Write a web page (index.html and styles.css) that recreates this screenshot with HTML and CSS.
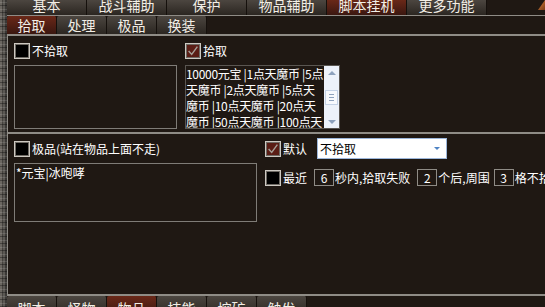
FILE: index.html
```html
<!DOCTYPE html>
<html lang="zh-CN">
<head>
  <meta charset="UTF-8" />
  <meta name="viewport" content="width=device-width, initial-scale=1" />
  <title>脚本挂机 - 物品</title>
  <link rel="stylesheet" href="styles.css">
</head>
<body>
  <div class="window">
    <div class="edge"></div>

    <div class="main">
      <nav class="tabs tabs-top">
        <span class="tab">基本</span>
        <span class="tab">战斗辅助</span>
        <span class="tab">保护</span>
        <span class="tab">物品辅助</span>
        <span class="tab active">脚本挂机</span>
        <span class="tab">更多功能</span>
        <span class="corner"></span>
      </nav>

      <nav class="tabs tabs-sub">
        <span class="tab active">拾取</span>
        <span class="tab">处理</span>
        <span class="tab">极品</span>
        <span class="tab">换装</span>
      </nav>

      <div class="panel">
        <!-- pick / no pick lists -->
        <section class="pick">
          <div class="col pick-left">
            <label class="check"><span class="box"></span>不拾取</label>
            <div class="list"></div>
          </div>
          <div class="col pick-right">
            <label class="check"><span class="box checked"><svg viewBox="0 0 16 16"><polyline points="3,8 6.5,12 13,3" /></svg></span>拾取</label>
            <div class="list list-scroll">
              <div class="list-text">10000元宝 |1点天魔币 |5点<br>天魔币 |2点天魔币 |5点天<br>魔币 |10点天魔币 |20点天<br>魔币 |50点天魔币 |100点天</div>
              <div class="scrollbar">
                <span class="arrow up"></span>
                <span class="thumb"><i></i><i></i><i></i></span>
                <span class="arrow down"></span>
              </div>
            </div>
          </div>
        </section>

        <!-- rare items -->
        <section class="rare">
          <div class="col rare-left">
            <label class="check"><span class="box"></span>极品(站在物品上面不走)</label>
            <div class="list list-rare">*元宝|冰咆哮</div>
          </div>
          <div class="col rare-right">
            <div class="row row-default">
              <label class="check"><span class="box checked"><svg viewBox="0 0 16 16"><polyline points="3,8 6.5,12 13,3" /></svg></span>默认</label>
              <div class="select">不拾取<span class="caret"></span></div>
            </div>
            <div class="row row-fail">
              <label class="check"><span class="box"></span>最近</label>
              <span class="num num-first">6</span>
              <span class="txt">秒内,拾取失败</span>
              <span class="num">2</span>
              <span class="txt txt-short">个后,周围</span>
              <span class="num">3</span>
              <span class="txt">格不拾取</span>
            </div>
          </div>
        </section>
      </div>

      <nav class="tabs tabs-bottom">
        <span class="tab">脚本</span>
        <span class="tab">怪物</span>
        <span class="tab active">物品</span>
        <span class="tab">技能</span>
        <span class="tab">挖矿</span>
        <span class="tab">触发</span>
      </nav>
    </div>
  </div>
</body>
</html>
```

FILE: styles.css
```css
body {
  margin: 0;
  background: #1f1813;
  color: #fff;
  font-family: "Noto Sans CJK SC", "Noto Sans", sans-serif;
  font-size: 12px;
  overflow: hidden;
}
.window {
  display: flex;
  height: 307px;
  overflow: hidden;
}
/* stone strip on the left */
.edge {
  flex: none;
  width: 7px;
  background:
    repeating-linear-gradient(0deg, rgba(0,0,0,0.35) 0 1px, transparent 1px 3px, rgba(255,255,255,0.12) 3px 4px, transparent 4px 7px),
    repeating-linear-gradient(90deg, #6b6761 0 2px, #45423e 2px 3px, #5c5954 3px 5px, #3a3835 5px 7px);
}
.main {
  flex: 1;
  min-width: 0;
  display: flex;
  flex-direction: column;
}

/* tabs */
.tabs {
  display: flex;
  flex: none;
}
.tab {
  flex: none;
  text-align: center;
  color: #f2eee6;
  font-size: 14px;
  box-sizing: border-box;
  background: linear-gradient(#4c4640, #2b2621);
  border-right: 1px solid #15100c;
}
.tab.active {
  background: linear-gradient(#6a2818, #3a1710);
}
.tabs-top {
  height: 15px;
  border-bottom: 1px solid #8f8c86;
  position: relative;
}
.tabs-top .tab {
  width: 80px;
  line-height: 11px;
}
.corner {
  position: absolute;
  right: 0;
  top: 0;
  width: 7px;
  height: 10px;
  background: linear-gradient(135deg, #d9823a, #7a3c18);
  clip-path: polygon(100% 0, 100% 100%, 0 100%);
}
.tabs-sub {
  height: 18px;
}
.tabs-sub .tab {
  width: 50px;
  line-height: 19px;
  border-radius: 2px 2px 0 0;
}
.tabs-bottom {
  height: 20px;
}
.tabs-bottom .tab {
  width: 50px;
  line-height: 24px;
  border-radius: 2px 2px 0 0;
}

/* main panel */
.panel {
  flex: none;
  border-top: 2px solid #8f8c86;
  border-bottom: 2px solid #8f8c86;
  border-left: 1px solid #8f8c86;
}
.pick,
.rare {
  display: flex;
  gap: 8px;
  box-sizing: border-box;
  padding: 7px 0 0 6px;
}
.pick {
  height: 98px;
  border-bottom: 2px solid #8f8c86;
}
.rare {
  height: 160px;
}
.col {
  flex: none;
  display: flex;
  flex-direction: column;
  gap: 6px;
}
.pick-left { width: 163px; }
.pick-right { width: 155px; }
.rare-left { width: 243px; }
.rare-right {
  flex: 1;
  min-width: 0;
  overflow: hidden;
  margin-top: -3px;
  gap: 10px;
}

/* checkbox */
.check {
  display: flex;
  align-items: center;
  gap: 2px;
  height: 16px;
  line-height: 16px;
  white-space: nowrap;
}
.box {
  flex: none;
  width: 16px;
  height: 16px;
  box-sizing: border-box;
  border: 1px solid #cdc9c2;
  box-shadow: inset 0 0 0 1px #6e6a64;
  background: #000;
}
.box.checked {
  background: #5a1d15;
}
.box svg {
  display: block;
  width: 14px;
  height: 14px;
}
.box polyline {
  fill: none;
  stroke: #a59f97;
  stroke-width: 1.6;
}

/* list boxes */
.list {
  box-sizing: border-box;
  height: 64px;
  border: 1px solid #7f7c77;
}
.list-scroll {
  display: flex;
  border-color: #5a5651;
}
.list-text {
  flex: 1;
  min-width: 0;
  overflow: hidden;
  white-space: nowrap;
  line-height: 16px;
  font-size: 12px;
  letter-spacing: -0.3px;
}
.scrollbar {
  flex: none;
  width: 15px;
  display: flex;
  flex-direction: column;
  align-items: center;
  justify-content: space-between;
  background: #edf2fa;
  padding: 5px 0 4px;
  box-sizing: border-box;
}
.arrow {
  width: 0;
  height: 0;
  border-left: 4px solid transparent;
  border-right: 4px solid transparent;
}
.arrow.up { border-bottom: 4px solid #8ea2bd; }
.arrow.down { border-top: 4px solid #8ea2bd; }
.thumb {
  width: 13px;
  height: 15px;
  box-sizing: border-box;
  border: 1px solid #c4d2e6;
  background: #f7f9fd;
  display: flex;
  flex-direction: column;
  align-items: center;
  justify-content: center;
  gap: 2px;
}
.thumb i {
  display: block;
  width: 5px;
  height: 1px;
  background: #8ea2bd;
}
.list-rare {
  height: 59px;
  line-height: 16px;
  padding: 1px 0 0 1px;
}

/* right side rows */
.row {
  flex: none;
  display: flex;
  align-items: center;
  white-space: nowrap;
}
.row-default {
  height: 21px;
}
.row-default .check {
  margin-right: 10px;
}
.select {
  flex: none;
  position: relative;
  width: 130px;
  height: 21px;
  box-sizing: border-box;
  border: 1px solid #9cb6da;
  background: #fff;
  color: #000;
  line-height: 19px;
  padding-left: 2px;
}
.caret {
  position: absolute;
  right: 6px;
  top: 8px;
  border-left: 3px solid transparent;
  border-right: 3px solid transparent;
  border-top: 3px solid #4f83c4;
}
.row-fail {
  height: 17px;
}
.num {
  flex: none;
  width: 20px;
  height: 17px;
  box-sizing: border-box;
  border: 1px solid #8f8c86;
  text-align: center;
  line-height: 15px;
  margin-right: 1px;
}
.num-first {
  margin-left: 7px;
}
.txt {
  flex: none;
  margin-right: 7px;
}
.txt-short {
  margin-right: 4px;
}
```
